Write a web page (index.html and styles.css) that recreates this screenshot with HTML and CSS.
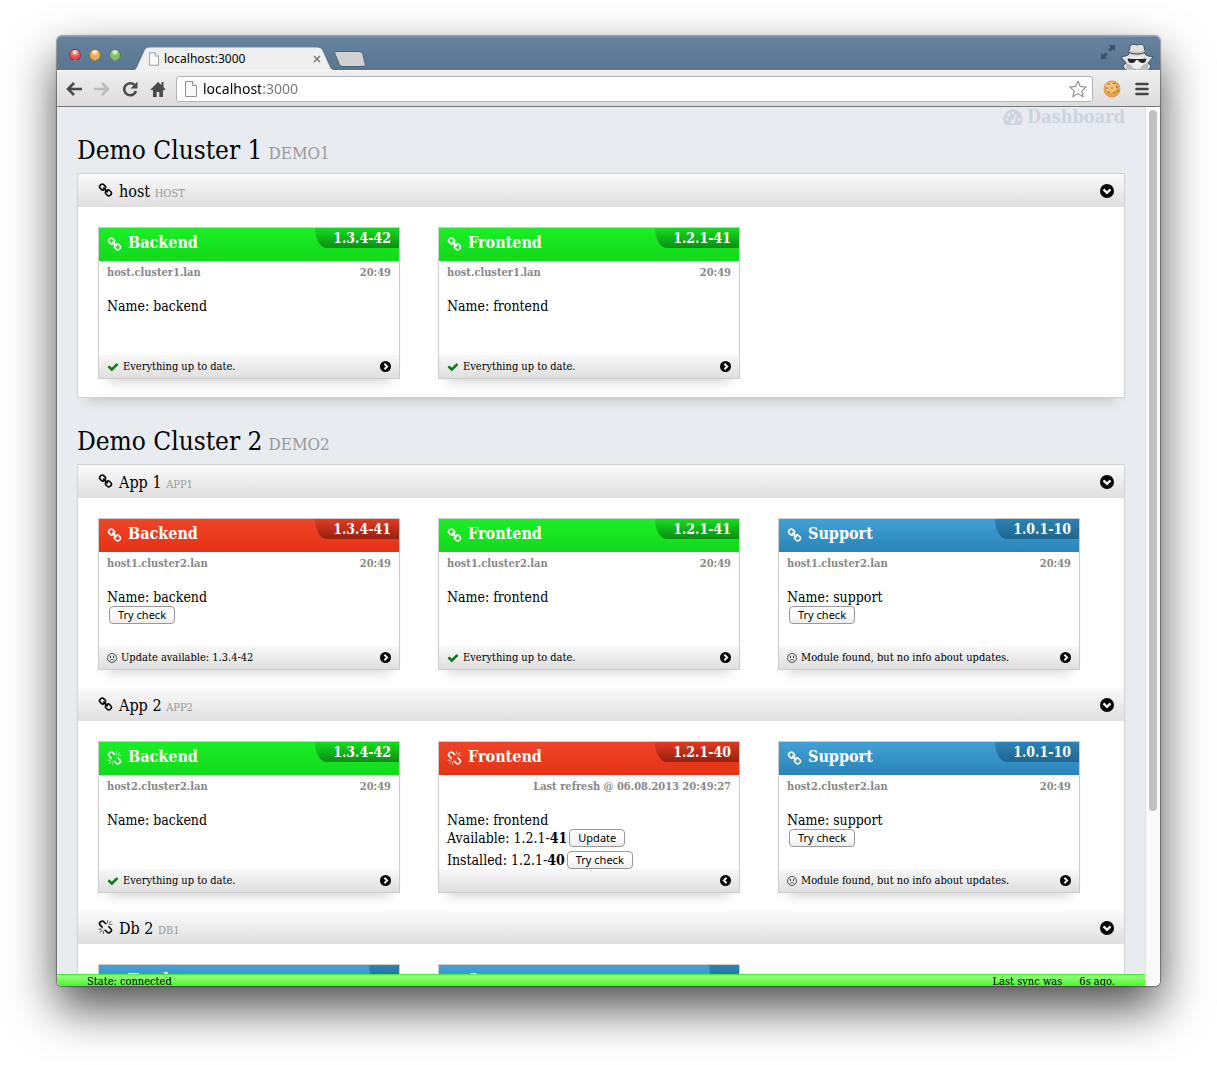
FILE: index.html
```html
<!DOCTYPE html>
<html lang="en">
<head>
<meta charset="utf-8">
<title>localhost:3000</title>
<link rel="stylesheet" href="styles.css">
</head>
<body>
<svg class="sprite" aria-hidden="true">
  <symbol id="link" viewBox="0 0 1792 1792"><path d="M1520 1216q0-40-28-68l-208-208q-28-28-68-28-42 0-72 32 3 3 19 18.500t21.500 21.500 15 19 13 25.500 3.500 27.500q0 40-28 68t-68 28q-15 0-27.500-3.500t-25.500-13-19-15-21.500-21.500-18.500-19q-33 31-33 73 0 40 28 68l206 207q27 27 68 27 40 0 68-26l147-146q28-28 28-67zm-703-705q0-40-28-68l-206-207q-28-28-68-28-39 0-68 27l-147 146q-28 28-28 67 0 40 28 68l208 208q27 27 68 27 42 0 72-31-3-3-19-18.500t-21.500-21.500-15-19-13-25.500-3.500-27.500q0-40 28-68t68-28q15 0 27.500 3.500t25.500 13 19 15 21.500 21.500 18.500 19q33-31 33-73zm895 705q0 120-85 203l-147 146q-83 83-203 83-121 0-204-85l-206-207q-83-83-83-203 0-123 88-209l-88-88q-86 88-208 88-120 0-204-84l-208-208q-84-84-84-204t85-203l147-146q83-83 203-83 121 0 204 85l206 207q83 83 83 203 0 123-88 209l88 88q86-88 208-88 120 0 204 84l208 208q84 84 84 204z"/></symbol>
  <symbol id="unlink" viewBox="0 0 1792 1792"><path d="M503 1271l-256 256q-10 9-23 9-12 0-23-9-9-10-9-23t9-23l256-256q10-9 23-9t23 9q9 10 9 23t-9 23zm169 41v320q0 14-9 23t-23 9-23-9-9-23v-320q0-14 9-23t23-9 23 9 9 23zm-224-224q0 14-9 23t-23 9h-320q-14 0-23-9t-9-23 9-23 23-9h320q14 0 23 9t9 23zm1264 128q0 120-85 203l-147 146q-83 83-203 83-121 0-204-85l-334-335q-21-21-42-56l239-18 273 274q28 28 68 27.500t68-27.500l147-146q28-28 28-67 0-40-28-68l-274-275 18-239q35 21 56 42l336 336q84 86 84 204zm-617-724l-239 18-273-274q-28-28-68-28-39 0-68 27l-147 146q-28 28-28 67 0 40 28 68l274 274-18 240q-35-21-56-42l-336-336q-84-86-84-204 0-120 85-203l147-146q83-83 203-83 121 0 204 85l334 335q21 21 42 56zm633 84q0 14-9 23t-23 9h-320q-14 0-23-9t-9-23 9-23 23-9h320q14 0 23 9t9 23zm-544-544v320q0 14-9 23t-23 9-23-9-9-23v-320q0-14 9-23t23-9 23 9 9 23zm407 151l-256 256q-11 9-23 9t-23-9q-9-10-9-23t9-23l256-256q10-9 23-9t23 9q9 10 9 23t-9 23z"/></symbol>
  <symbol id="check" viewBox="0 0 1792 1792"><path d="M1671 566q0 40-28 68l-724 724-136 136q-28 28-68 28t-68-28l-136-136-362-362q-28-28-28-68t28-68l136-136q28-28 68-28t68 28l294 295 656-657q28-28 68-28t68 28l136 136q28 28 28 68z"/></symbol>
  <symbol id="down" viewBox="0 0 14 14"><circle cx="7" cy="7" r="7"/><path d="M3.500 5.300 7 8.800l3.500-3.500" fill="none" stroke="#f4f4f4" stroke-width="2.400"/></symbol>
  <symbol id="right" viewBox="0 0 14 14"><circle cx="7" cy="7" r="7"/><path d="M5.600 3.500 9.100 7l-3.500 3.500" fill="none" stroke="#f0f0f0" stroke-width="2.600"/></symbol>
  <symbol id="left" viewBox="0 0 14 14"><circle cx="7" cy="7" r="7"/><path d="M8.400 3.500 4.900 7l3.500 3.500" fill="none" stroke="#f0f0f0" stroke-width="2.600"/></symbol>
  <symbol id="frown" viewBox="0 0 12 12"><circle cx="6" cy="6" r="5.400" fill="none" stroke="#222" stroke-width=".9"/><path d="M3.300 9Q6 5.800 8.700 9M2.800 3.400l2 1M9.200 3.400l-2 1" fill="none" stroke="#222" stroke-width=".8"/><circle cx="4.200" cy="5" r=".7"/><circle cx="7.800" cy="5" r=".7"/></symbol>
  <symbol id="page" viewBox="0 0 12 16"><path d="M.5.500h7l4 4v11H.5z" fill="#f8f8f8" stroke="#929292"/><path d="M7.500.500v4h4" fill="#fff" stroke="#929292"/></symbol>
</svg>

<div class="window">
  <div class="titlebar">
    <div class="lights">
      <button class="light red" aria-label="Close"></button>
      <button class="light amber" aria-label="Minimise"></button>
      <button class="light green-light" aria-label="Zoom"></button>
    </div>
    <div class="tab">
      <svg class="tab-shape" viewBox="0 0 206 24" preserveAspectRatio="none" aria-hidden="true"><path d="M0 24c4 0 5-1 6-4l7-16c1-3 3-4 6-4h166c4 0 6 1 7 4l7 16c1 3 3 4 7 4z" fill="#efefef"/><path d="M0 24c4 0 5-1 6-4l7-16c1-3 3-4 6-4h166c4 0 6 1 7 4l7 16c1 3 3 4 7 4" fill="none" stroke="#47607a" stroke-width=".7"/></svg>
      <svg class="tab-page"><use href="#page"/></svg>
      <span class="tab-title">localhost:3000</span>
      <button class="tab-close" aria-label="Close tab"><svg viewBox="0 0 8 8"><path d="m1 1 6 6M7 1 1 7" stroke="#777" stroke-width="1.500"/></svg></button>
    </div>
    <button class="new-tab" aria-label="New tab"><svg viewBox="0 0 32 16"><path d="M3 .500h22c2 0 3 1 4 3l2 9c1 2 0 3-2 3H9c-2 0-3-1-4-3L1 3C0 1 1 .500 3 .500z" fill="#d0d0d0" stroke="#4a637d"/></svg></button>
    <div class="titlebar-end">
      <button class="fullscreen" aria-label="Full screen"><svg viewBox="0 0 14 14"><path d="M7.500 0H14v6.500l-2.200-2.200-2.600 2.500-2-2 2.500-2.600zM6.500 14H0V7.500l2.200 2.200 2.600-2.500 2 2-2.500 2.600z" fill="#3d5268"/></svg></button>
      <svg class="incognito" viewBox="0 0 34 27" aria-hidden="true"><path d="M5 27 3 23l3-3-5-6c3-1 7-1 8-3l1-8c1-2 4-2 7-1 3-1 6-1 7 1l1 8c1 2 5 2 8 3l-5 6 3 3-2 4z" fill="#e2e2e2" stroke="#3c4f63"/><path d="M9 10c5 3 11 3 16 0l-.500-3c-5 2-10 2-15 0z" fill="#c8c8c8"/><path d="M9 9.500c5 2 11 2 16 0" fill="none" stroke="#444"/><path d="M7 15c6-2 14-2 20 0l-3 6-7 6-7-6z" fill="#ededed"/><path d="M7.500 15.500q9.500 1 19 0l-1 3q-1 1.500-3.500 1.500t-4-3h-2q-1 3-4 3t-3.500-1.500z" fill="#222"/><path d="m6 20 5 2 4 5H6zM28 20l-5 2-4 5h9z" fill="#bdbdbd"/></svg>
    </div>
  </div>

  <div class="toolbar">
    <button class="tool" aria-label="Back"><svg viewBox="0 0 16 16"><path d="M8 2 2 8l6 6M2.500 8H16" fill="none" stroke="#4b4b4b" stroke-width="2.600"/></svg></button>
    <button class="tool" aria-label="Forward"><svg viewBox="0 0 16 16"><path d="m8 2 6 6-6 6M13.500 8H0" fill="none" stroke="#bbb" stroke-width="2.600"/></svg></button>
    <button class="tool" aria-label="Reload"><svg viewBox="0 0 16 16"><path d="M12.500 4A6 6 0 1 0 14 10" fill="none" stroke="#4b4b4b" stroke-width="2.600"/><path d="M15.500.500v7h-7z" fill="#4b4b4b"/></svg></button>
    <button class="tool" aria-label="Home"><svg viewBox="0 0 16 16"><path d="M8 1 .500 8.500l1.500 1L3 8.700V16h3.700v-5h2.600v5H13V8.700l1 .8 1.500-1L13.500 6V1h-2v3z" fill="#4b4b4b"/></svg></button>
    <div class="omnibox">
      <svg class="omni-page"><use href="#page"/></svg>
      <input class="address" type="text" value="localhost:3000" aria-label="Address">
      <button class="star" aria-label="Bookmark"><svg viewBox="0 0 18 18"><path d="m9 1 2.300 5.600 6 .4-4.600 3.900 1.500 5.900L9 13.600l-5.200 3.200 1.500-5.900L.7 7l6-.4z" fill="#fff" stroke="#777" stroke-linejoin="round"/></svg></button>
    </div>
    <button class="cookie" aria-label="Cookies"><svg viewBox="0 0 18 18"><circle cx="9" cy="9" r="8" fill="#e9a14a" stroke="#dc9850"/><circle cx="8" cy="7.500" r="5.500" fill="#f6c27c"/><g fill="#8a4a1c"><circle cx="6" cy="4" r=".8"/><circle cx="11" cy="3.500" r=".8"/><circle cx="4" cy="8" r=".8"/><circle cx="9" cy="8" r=".8"/><circle cx="13.500" cy="7" r=".8"/><circle cx="6" cy="12" r=".8"/><circle cx="11" cy="12.500" r=".8"/><circle cx="14.500" cy="11" r=".8"/></g></svg></button>
    <button class="menu" aria-label="Menu"><svg viewBox="0 0 14 14"><path d="M1.500 2h11M1.500 7h11M1.500 12h11" stroke="#444" stroke-width="2.600" stroke-linecap="round"/></svg></button>
  </div>

  <div class="viewport">
    <div class="page">
      <main class="content">
        <nav class="topnav"><a class="dashboard" href="#"><svg viewBox="0 0 20 16"><path d="M2.500 16A9.700 9.700 0 0 1 .3 10a9.700 9.700 0 0 1 19.400 0 9.700 9.700 0 0 1-2.200 6z" fill="#ccd4de"/><g fill="#e8ecf1"><circle cx="4" cy="10.500" r="1.400"/><circle cx="5.800" cy="6" r="1.400"/><circle cx="10" cy="4" r="1.400"/><circle cx="16" cy="10.500" r="1.400"/><circle cx="10" cy="12.500" r="2.300"/></g><path d="m10 12.500 3.200-7" stroke="#e8ecf1" stroke-width="1.500"/></svg>Dashboard</a></nav>

        <h1 class="cluster-title">Demo Cluster 1<small>DEMO1</small></h1>
        <section class="cluster">
          <h2 class="group"><svg class="icon"><use href="#link"/></svg><span>host <small>HOST</small></span><button class="fold" aria-label="Collapse host"><svg><use href="#down"/></svg></button></h2>
          <div class="cards">
            <article class="card green">
              <header><svg class="icon"><use href="#link"/></svg><h3>Backend</h3><span class="version">1.3.4-42</span></header>
              <div class="body"><p class="meta"><span>host.cluster1.lan</span><time>20:49</time></p><p>Name: backend</p></div>
              <footer><svg class="ok"><use href="#check"/></svg><span>Everything up to date.</span><button class="flip" aria-label="Details"><svg><use href="#right"/></svg></button></footer>
            </article>
            <article class="card green">
              <header><svg class="icon"><use href="#link"/></svg><h3>Frontend</h3><span class="version">1.2.1-41</span></header>
              <div class="body"><p class="meta"><span>host.cluster1.lan</span><time>20:49</time></p><p>Name: frontend</p></div>
              <footer><svg class="ok"><use href="#check"/></svg><span>Everything up to date.</span><button class="flip" aria-label="Details"><svg><use href="#right"/></svg></button></footer>
            </article>
          </div>
        </section>

        <h1 class="cluster-title">Demo Cluster 2<small>DEMO2</small></h1>
        <section class="cluster">
          <h2 class="group"><svg class="icon"><use href="#link"/></svg><span>App 1 <small>APP1</small></span><button class="fold" aria-label="Collapse App 1"><svg><use href="#down"/></svg></button></h2>
          <div class="cards">
            <article class="card red-card">
              <header><svg class="icon"><use href="#link"/></svg><h3>Backend</h3><span class="version">1.3.4-41</span></header>
              <div class="body"><p class="meta"><span>host1.cluster2.lan</span><time>20:49</time></p><p>Name: backend</p><button class="push">Try check</button></div>
              <footer><svg class="sad"><use href="#frown"/></svg><span>Update available: 1.3.4-42</span><button class="flip" aria-label="Details"><svg><use href="#right"/></svg></button></footer>
            </article>
            <article class="card green">
              <header><svg class="icon"><use href="#link"/></svg><h3>Frontend</h3><span class="version">1.2.1-41</span></header>
              <div class="body"><p class="meta"><span>host1.cluster2.lan</span><time>20:49</time></p><p>Name: frontend</p></div>
              <footer><svg class="ok"><use href="#check"/></svg><span>Everything up to date.</span><button class="flip" aria-label="Details"><svg><use href="#right"/></svg></button></footer>
            </article>
            <article class="card blue">
              <header><svg class="icon"><use href="#link"/></svg><h3>Support</h3><span class="version">1.0.1-10</span></header>
              <div class="body"><p class="meta"><span>host1.cluster2.lan</span><time>20:49</time></p><p>Name: support</p><button class="push">Try check</button></div>
              <footer><svg class="sad"><use href="#frown"/></svg><span>Module found, but no info about updates.</span><button class="flip" aria-label="Details"><svg><use href="#right"/></svg></button></footer>
            </article>
          </div>

          <h2 class="group"><svg class="icon"><use href="#link"/></svg><span>App 2 <small>APP2</small></span><button class="fold" aria-label="Collapse App 2"><svg><use href="#down"/></svg></button></h2>
          <div class="cards">
            <article class="card green">
              <header><svg class="icon"><use href="#unlink"/></svg><h3>Backend</h3><span class="version">1.3.4-42</span></header>
              <div class="body"><p class="meta"><span>host2.cluster2.lan</span><time>20:49</time></p><p>Name: backend</p></div>
              <footer><svg class="ok"><use href="#check"/></svg><span>Everything up to date.</span><button class="flip" aria-label="Details"><svg><use href="#right"/></svg></button></footer>
            </article>
            <article class="card red-card">
              <header><svg class="icon"><use href="#unlink"/></svg><h3>Frontend</h3><span class="version">1.2.1-40</span></header>
              <div class="body"><p class="meta"><time>Last refresh @ 06.08.2013 20:49:27</time></p><p>Name: frontend</p>
                <div class="line"><span>Available: 1.2.1-<b>41</b></span><button class="push">Update</button></div>
                <div class="line"><span>Installed: 1.2.1-<b>40</b></span><button class="push">Try check</button></div></div>
              <footer><button class="flip" aria-label="Back"><svg><use href="#left"/></svg></button></footer>
            </article>
            <article class="card blue">
              <header><svg class="icon"><use href="#link"/></svg><h3>Support</h3><span class="version">1.0.1-10</span></header>
              <div class="body"><p class="meta"><span>host2.cluster2.lan</span><time>20:49</time></p><p>Name: support</p><button class="push">Try check</button></div>
              <footer><svg class="sad"><use href="#frown"/></svg><span>Module found, but no info about updates.</span><button class="flip" aria-label="Details"><svg><use href="#right"/></svg></button></footer>
            </article>
          </div>

          <h2 class="group"><svg class="icon"><use href="#unlink"/></svg><span>Db 2 <small>DB1</small></span><button class="fold" aria-label="Collapse Db 2"><svg><use href="#down"/></svg></button></h2>
          <div class="cards">
            <article class="card blue">
              <header><svg class="icon"><use href="#unlink"/></svg><h3>Tracker</h3><span class="version">&nbsp;</span></header>
              <div class="body"></div>
              <footer></footer>
            </article>
            <article class="card blue">
              <header><svg class="icon"><use href="#unlink"/></svg><h3>Server</h3><span class="version">&nbsp;</span></header>
              <div class="body"></div>
              <footer></footer>
            </article>
          </div>
        </section>
      </main>
      <div class="status"><span>State: connected</span><span class="sync"><span>Last sync was</span><span>6s ago.</span></span></div>
    </div>
    <div class="scrollbar" aria-hidden="true"><div class="thumb"></div></div>
  </div>
</div>
</body>
</html>
```
FILE: styles.css
```css
* { box-sizing: border-box; }

body {
  margin: 0;
  height: 100vh;
  padding: 36px 57px 79px;
  display: flex;
  background: #fff;
  color: #000;
  font-family: "Roboto Slab", "DejaVu Serif Condensed", "DejaVu Serif", serif;
  overflow: hidden;
}

h1, h2, h3, p { margin: 0; font-weight: normal; }
svg { display: block; fill: currentColor; }
.sprite { position: absolute; width: 0; height: 0; }

button {
  border: 0;
  padding: 0;
  background: none;
  color: inherit;
  flex: none;
}

.window {
  flex: 1;
  min-width: 0;
  display: flex;
  flex-direction: column;
  border-radius: 5px;
  overflow: hidden;
  box-shadow: 0 0 1px 1px rgba(0, 0, 0, .35), 0 22px 48px rgba(0, 0, 0, .7);
}

/* Browser frame */
.titlebar {
  height: 34px;
  flex: none;
  display: flex;
  align-items: flex-end;
  padding: 0 6px 0 12px;
  background: linear-gradient(#66839f, #5a7592);
  box-shadow: inset 0 1px #8099b0;
}
.lights { display: flex; gap: 8px; align-self: center; padding-top: 4px; }
.light {
  width: 12px;
  height: 12px;
  border-radius: 50%;
  border: 1px solid rgba(0, 0, 0, .35);
}
.red { background: radial-gradient(circle at 50% 20%, #fff, #e8585a 45%, #d63a40); }
.amber { background: radial-gradient(circle at 50% 20%, #fff, #f0a848 45%, #f3b95a); }
.green-light { background: radial-gradient(circle at 50% 20%, #fff, #78bd62 45%, #8fce78); }

.tab {
  position: relative;
  width: 206px;
  height: 23px;
  margin-left: 10px;
  padding: 0 16px 0 18px;
  display: flex;
  align-items: center;
  font: 12px/16px "Noto Sans", sans-serif;
}
.tab-shape { position: absolute; inset: 0; width: 100%; height: 100%; }
.tab-page { position: relative; width: 10px; height: 14px; }
.tab-title { position: relative; flex: 1; padding-left: 5px; }
.tab-close { position: relative; }
.tab-close svg { width: 8px; height: 8px; }
.new-tab { align-self: flex-end; margin: 0 0 3px -3px; }
.new-tab svg { width: 32px; height: 16px; }
.titlebar-end { margin-left: auto; display: flex; gap: 5px; align-items: flex-end; }
.fullscreen { padding-bottom: 11px; }
.fullscreen svg { width: 14px; height: 14px; }
.incognito { width: 34px; height: 27px; }

.toolbar {
  height: 37px;
  flex: none;
  display: flex;
  align-items: center;
  gap: 12px;
  padding: 0 11px 0 9px;
  background: linear-gradient(#efefef, #dcdcdc);
  border-top: 1px solid #f8f8f8;
  border-bottom: 1px solid #777;
}
.tool svg { width: 16px; height: 16px; }
.omnibox {
  flex: 1;
  min-width: 0;
  height: 26px;
  margin-left: -2px;
  padding: 0 5px 0 8px;
  display: flex;
  align-items: center;
  background: #fff;
  border: 1px solid #b4b4b4;
  border-radius: 3px;
}
.omni-page { width: 12px; height: 16px; flex: none; }
.address {
  flex: 1;
  min-width: 0;
  border: 0;
  padding: 0;
  margin-left: 6px;
  outline: 0;
  font: 14px/20px "Noto Sans", sans-serif;
  color: transparent;
  background: linear-gradient(90deg, #000 58px, #777 58px);
  -webkit-background-clip: text;
  background-clip: text;
}
.star svg { width: 18px; height: 18px; }
.cookie { margin: 0 2px 0 -2px; }
.cookie svg { width: 18px; height: 18px; }
.menu svg { width: 14px; height: 14px; }

/* Scrolling page */
.viewport { flex: 1; min-height: 0; display: flex; }
.page {
  flex: 1;
  min-width: 0;
  display: flex;
  flex-direction: column;
  background: #e8ecf1;
}
.content { flex: 1; min-height: 0; overflow: hidden; padding: 0 20px; }
.scrollbar {
  width: 15px;
  padding: 3px 3px 0;
  background: #fafafa;
  border-left: 1px solid #e2e2e2;
}
.thumb { height: 80%; border-radius: 4px; background: #c1c1c1; }

.topnav { display: flex; justify-content: flex-end; height: 20px; }
.dashboard {
  display: flex;
  align-items: center;
  gap: 4px;
  font-size: 18px;
  line-height: 20px;
  font-weight: bold;
  color: #ccd4de;
  text-decoration: none;
}
.dashboard svg { width: 20px; height: 16px; }

.cluster-title {
  display: flex;
  align-items: baseline;
  gap: 6px;
  height: 46px;
  font-size: 26px;
  line-height: 46px;
}
.cluster-title small { font-size: 17px; line-height: 20px; color: #999; }
.cluster {
  margin-bottom: 20px;
  background: #fff;
  border: 1px solid #d0d3d6;
  box-shadow: 0 12px 12px -10px rgba(0, 0, 0, .2);
}

.group {
  height: 33px;
  display: flex;
  align-items: center;
  gap: 6px;
  padding: 0 10px 0 20px;
  font-size: 16px;
  line-height: 22px;
  background: linear-gradient(#fafafa, #dfdfdf);
}
.group span { padding-top: 2px; }
.group small { font-size: 11px; line-height: 16px; color: #999; }
.icon { width: 15px; height: 15px; flex: none; }
.fold { margin-left: auto; }
.fold svg { width: 14px; height: 14px; }

.cards { display: flex; flex-wrap: wrap; gap: 38px; padding: 20px 20px 18px; }
.card {
  width: 302px;
  height: 152px;
  display: flex;
  flex-direction: column;
  background: #fff;
  border: 1px solid #ccc;
  box-shadow: 0 12px 12px -10px rgba(0, 0, 0, .2);
  font-size: 14px;
  line-height: 18px;
}
.card header {
  height: 33px;
  display: flex;
  align-items: center;
  gap: 6px;
  padding-left: 8px;
  color: #fff;
}
.card h3 { font-size: 16px; line-height: 20px; font-weight: bold; padding-bottom: 4px; }
.version {
  align-self: flex-start;
  margin-left: auto;
  padding: 0 8px 0 18px;
  font-size: 14px;
  line-height: 20px;
  font-weight: bold;
  border-bottom-left-radius: 12px 20px;
}
.green header { background: linear-gradient(#1aee26, #12da1c); }
.green .version { background: linear-gradient(#16dc20, #0b8d14); }
.red-card header { background: linear-gradient(#ef4429, #e53213); }
.red-card .version { background: linear-gradient(#e23a20, #98200f); }
.blue header { background: linear-gradient(#42a0d6, #2985b8); }
.blue .version { background: linear-gradient(#2b83b6, #206690); }

.body { flex: 1; min-height: 0; padding: 4px 8px 0; }
.meta {
  display: flex;
  justify-content: space-between;
  margin-bottom: 16px;
  font-size: 11px;
  line-height: 16px;
  font-weight: bold;
  color: #888;
}
.meta time { margin-left: auto; }
.line { display: flex; align-items: center; margin-bottom: 4px; }
.push {
  display: block;
  height: 18px;
  margin-left: 2px;
  padding: 0 8px;
  font: 11px/16px "Noto Sans", sans-serif;
  color: #000;
  background: linear-gradient(#fff 40%, #ececec);
  border: 1px solid #999;
  border-radius: 4px;
}
.card footer {
  height: 23px;
  display: flex;
  align-items: center;
  gap: 4px;
  padding: 0 8px;
  font-size: 11px;
  line-height: 16px;
  background: linear-gradient(#f8f8f8, #dfdfdf);
}
.ok { width: 12px; height: 12px; color: #0a7d12; }
.sad { width: 10px; height: 10px; }
.flip { margin-left: auto; }
.flip svg { width: 11px; height: 11px; }

.status {
  height: 12px;
  flex: none;
  overflow: hidden;
  display: flex;
  justify-content: space-between;
  padding: 0 30px;
  font-size: 11px;
  line-height: 14px;
  background: linear-gradient(#a2fb8c, #43f924);
  border-top: 1px solid #3cf52a;
}
.sync { display: flex; gap: 17px; }
```
